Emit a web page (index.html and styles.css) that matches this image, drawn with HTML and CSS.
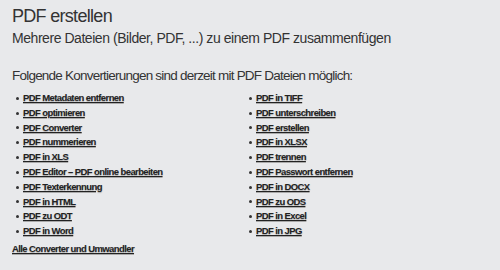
FILE: index.html
```html
<!DOCTYPE html>
<html lang="de">
    <head>
        <meta charset="UTF-8">
        <title>PDF erstellen</title>
        <link rel="stylesheet" href="styles.css">
    </head>
    <body>
        <div class="container">
            <h1>PDF erstellen</h1>
            <h2>Mehrere Dateien (Bilder, PDF, ...) zu einem PDF zusammenfügen</h2>
            <p class="intro">Folgende Konvertierungen sind derzeit mit PDF Dateien möglich:</p>
            <ul class="tools">
                <li><a href="#">PDF Metadaten entfernen</a></li>
                <li><a href="#">PDF optimieren</a></li>
                <li><a href="#">PDF Converter</a></li>
                <li><a href="#">PDF nummerieren</a></li>
                <li><a href="#">PDF in XLS</a></li>
                <li><a href="#">PDF Editor – PDF online bearbeiten</a></li>
                <li><a href="#">PDF Texterkennung</a></li>
                <li><a href="#">PDF in HTML</a></li>
                <li><a href="#">PDF zu ODT</a></li>
                <li><a href="#">PDF in Word</a></li>
                <li><a href="#">PDF in TIFF</a></li>
                <li><a href="#">PDF unterschreiben</a></li>
                <li><a href="#">PDF erstellen</a></li>
                <li><a href="#">PDF in XLSX</a></li>
                <li><a href="#">PDF trennen</a></li>
                <li><a href="#">PDF Passwort entfernen</a></li>
                <li><a href="#">PDF in DOCX</a></li>
                <li><a href="#">PDF zu ODS</a></li>
                <li><a href="#">PDF in Excel</a></li>
                <li><a href="#">PDF in JPG</a></li>
            </ul>
            <a class="all-link" href="#">Alle Converter und Umwandler</a>
        </div>
    </body>
</html>
```

FILE: styles.css
```css
/* Page font and background */
body {
    margin: 0;
    font-family: "Liberation Sans", Arial, sans-serif;
    background-color: #e8e9eb;
    color: #333;
}

.container {
    padding: 4px 12px;
}

/* Headings */
h1 {
    margin: 0;
    font-size: 18px;
    font-weight: normal;
    line-height: 24px;
    letter-spacing: -0.7px;
}

h2 {
    margin: 0;
    font-size: 14px;
    font-weight: normal;
    line-height: 20px;
    letter-spacing: -0.45px;
}

.intro {
    margin: 19px 0 6px;
    font-size: 13.5px;
    line-height: 18px;
    letter-spacing: -0.78px;
}

/* Converter list in two columns */
.tools {
    column-count: 2;
    column-gap: 0;
    width: 466px;
    margin: 0;
    padding: 0 0 0 4px;
    list-style: none;
    font-size: 9.5px;
}

.tools li {
    display: flex;
    align-items: center;
    line-height: 14.8px;
}

.tools li::before {
    content: "";
    width: 3px;
    height: 3px;
    margin-right: 4px;
    border-radius: 50%;
    background-color: #333;
}

.tools a,
.all-link {
    color: #222;
    font-weight: bold;
    letter-spacing: -0.6px;
    text-shadow: 0 1px 1px #aaa;
}

.all-link {
    display: block;
    margin-top: 4px;
    font-size: 9.5px;
}
```
